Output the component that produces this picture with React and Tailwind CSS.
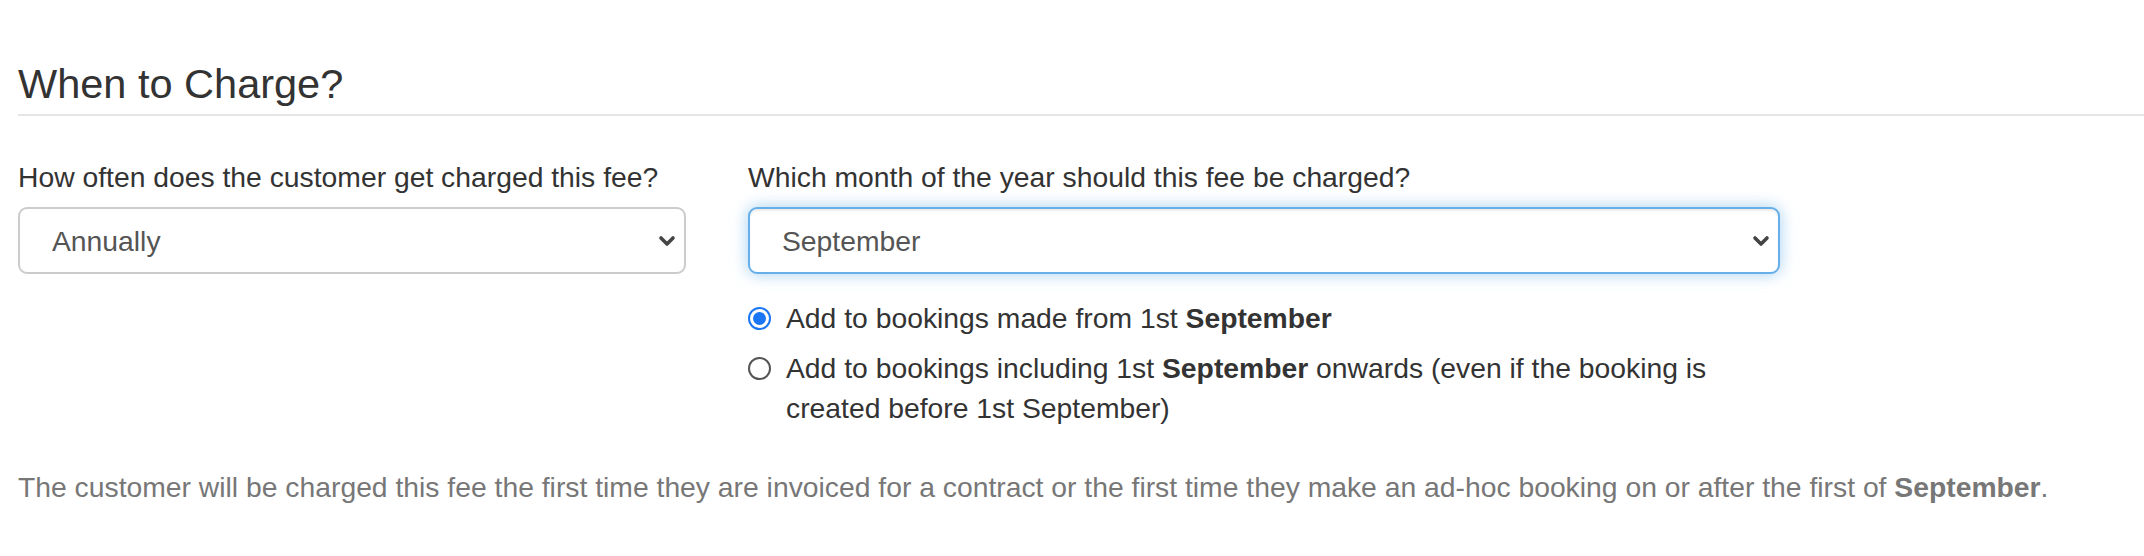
import React from "react";

const Chevron = () => (
  <svg width="18" height="12" viewBox="0 0 18 12" className="shrink-0">
    <polyline points="3,3 9,9 15,3" fill="none" stroke="#444" strokeWidth="3.6" strokeLinecap="round" strokeLinejoin="round" />
  </svg>
);

const Select = ({ value, focused }) => (
  <div
    className={`flex items-center justify-between h-[67px] rounded-[9px] bg-white pl-[32px] pr-[8px] text-[28.3px] text-[#555] ${
      focused
        ? "border-2 border-[#66afe9] shadow-[inset_0_2px_2px_rgba(0,0,0,0.075),0_0_16px_rgba(102,175,233,0.6)]"
        : "border-2 border-[#ccc]"
    }`}
  >
    <span className="pt-[2px]">{value}</span>
    <Chevron />
  </div>
);

const Radio = ({ checked }) =>
  checked ? (
    <span className="mt-[9px] flex h-[23px] w-[23px] shrink-0 items-center justify-center rounded-full border-[2.5px] border-[#1a76f2] bg-white">
      <span className="h-[13px] w-[13px] rounded-full bg-[#1a76f2]" />
    </span>
  ) : (
    <span className="mt-[9px] h-[23px] w-[23px] shrink-0 rounded-full border-2 border-[#555] bg-white" />
  );

export default function App() {
  return (
    <div className="min-h-screen bg-white pt-[54px] font-['Liberation_Sans',Arial,sans-serif] text-[#333] antialiased">
      <div className="ml-[18px] border-b-2 border-[#e5e5e5] text-[41.5px] leading-[60px]">
        When to Charge?
      </div>

      <div className="mt-[41px] flex gap-[62px] pl-[18px]">
        <div className="w-[668px]">
          <div className="text-[28.3px] leading-[40px] mb-[10px]">How often does the customer get charged this fee?</div>
          <Select value="Annually" />
        </div>

        <div className="w-[1032px]">
          <div className="text-[28.3px] leading-[40px] mb-[10px]">Which month of the year should this fee be charged?</div>
          <Select value="September" focused />

          <div className="mt-[24px] flex flex-col gap-[10px] text-[28.3px] leading-[40px]">
            <label className="flex items-start gap-[15px]">
              <Radio checked />
              <span>
                Add to bookings made from 1st <b>September</b>
              </span>
            </label>
            <label className="flex items-start gap-[15px]">
              <Radio />
              <span>
                Add to bookings including 1st <b>September</b> onwards (even if the booking is
                <br />
                created before 1st September)
              </span>
            </label>
          </div>
        </div>
      </div>

      <p className="mt-[39px] pl-[18px] whitespace-nowrap text-[28.3px] leading-[40px] text-[#777]">
        The customer will be charged this fee the first time they are invoiced for a contract or the first time they make an ad-hoc booking on or after the first of <b>September</b>.
      </p>
    </div>
  );
}
